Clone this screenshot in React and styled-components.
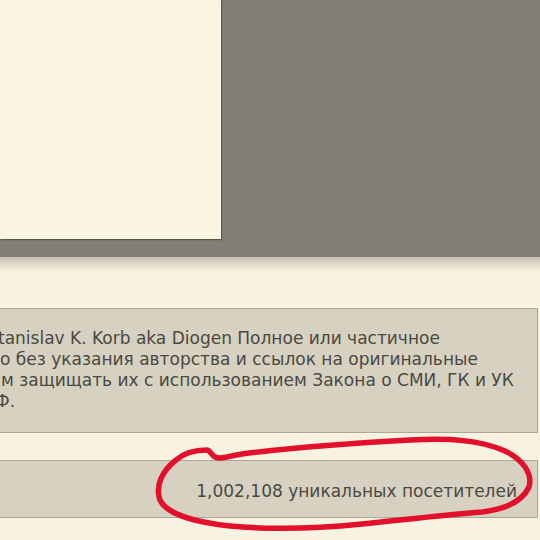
import React from "react";
import styled, {createGlobalStyle} from "styled-components";

const GlobalStyle = createGlobalStyle`
  html, body {
    margin: 0;
    padding: 0;
    background: #f8f2e1;
    overflow: hidden;
  }
`;

const noticeLines = [
  {text: "tanislav K. Korb aka Diogen Полное или частичное", shift: -3},
  {text: "о без указания авторства и ссылок на оригинальные", shift: -1},
  {text: "м защищать их с использованием Закона о СМИ, ГК и УК", shift: 0},
  {text: "Ф.", shift: -6}
];

const App = () => (
  <Page>
    <GlobalStyle />
    <TopBand>
      <Panel />
    </TopBand>
    <Fade />
    <Content>
      <Notice>
        {noticeLines.map(line => (
          <Line key={line.text} $shift={line.shift}>{line.text}</Line>
        ))}
      </Notice>
      <Counter>1,002,108 уникальных посетителей</Counter>
    </Content>
    <Scribble viewBox="0 0 540 540" width="540" height="540">
      <path
        d="M207 450 C195 450 184 453 176 460 C162 471 155 486 160 500 C166 513 192 522 230 526 C272 530 322 528 362 524 C402 520 442 515 482 512 C507 509 523 500 529 487 C533 473 522 459 505 451 C480 440 450 438 410 440 C352 443 282 449 242 454 C228 456 221 460 215 457 C211 455 210 450 207 450 Z"
        fill="none"
        stroke="#e2102b"
        strokeWidth="5.5"
        strokeLinejoin="round"
      />
    </Scribble>
  </Page>
);

const Page = styled.div`
  position: relative;
  width: 540px;
  height: 540px;
  overflow: hidden;
  font-family: "DejaVu Sans", Verdana, sans-serif;
`;

const TopBand = styled.div`
  height: 257px;
  background: #817e76;
  display: flex;
  align-items: flex-start;
`;

const Panel = styled.div`
  width: 220px;
  height: 239px;
  background: #faf4e1;
  border-right: 1px solid #fffcef;
  box-shadow: 1px 1px 1px rgba(40, 38, 32, 0.45);
`;

const Fade = styled.div`
  height: 15px;
  background: linear-gradient(#c7c1b1, #f8f2e1);
`;

const Content = styled.div`
  display: flex;
  flex-direction: column;
  gap: 27px;
  padding: 36px 2px 0 0;
  margin-left: -2px;
`;

const Notice = styled.div`
  background: #d6d1c0;
  border: 1px solid #aca798;
  box-shadow: 0 -1px 0 #fffaee;
  padding: 19px 20px 20px 2px;
  display: flex;
  flex-direction: column;
`;

const Line = styled.div`
  font-size: 17px;
  line-height: 21px;
  color: #4a4943;
  white-space: nowrap;
  margin-left: ${props => props.$shift}px;
`;

const Counter = styled.div`
  background: #d6d1c0;
  border: 1px solid #aca798;
  padding: 20px 20px 15px;
  font-size: 17px;
  line-height: 21px;
  color: #4a4943;
  text-align: right;
  white-space: nowrap;
`;

const Scribble = styled.svg`
  position: absolute;
  left: 0;
  top: 0;
  pointer-events: none;
`;

export default App;
